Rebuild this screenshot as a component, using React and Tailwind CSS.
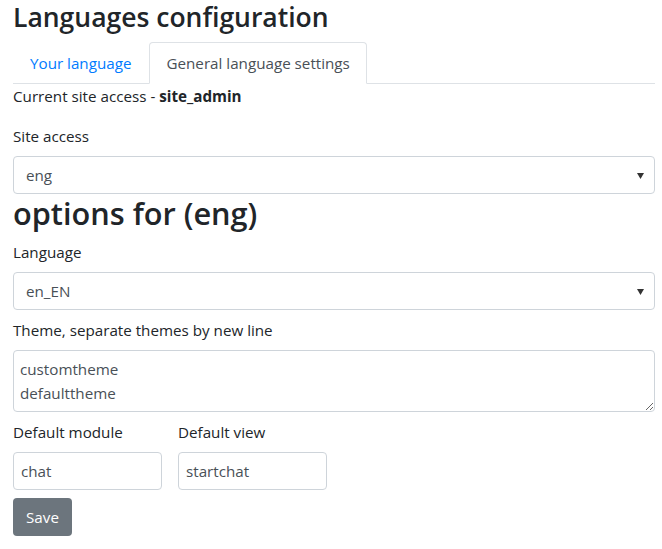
const FONT = '"Open Sans", "Noto Sans", sans-serif';

function SelectBox({ value }) {
  return (
    <div className="flex h-[38px] w-full items-center justify-between rounded-[4px] border border-[#ced4da] bg-white pl-[12px] pr-[10px] text-[15.2px] text-[#495057]">
      <span>{value}</span>
      <svg width="7" height="6" viewBox="0 0 7 6" className="mt-[1px]">
        <path d="M0 0 H7 L3.5 6 Z" fill="#333" />
      </svg>
    </div>
  );
}

function Label({ children }) {
  return <label className="mb-[8px] block h-[24px] text-[15.2px] leading-[24px] text-[#212529]">{children}</label>;
}

export default function App() {
  return (
    <div
      className="min-h-[549px] bg-white pl-[13px] text-[15.2px] leading-[24px] text-[#212529]"
      style={{ fontFamily: FONT }}
    >
      <div className="w-[642px]">
        <h1 className="mb-[8px] pt-[1px] text-[26.5px] font-semibold leading-[33px]">Languages configuration</h1>

        <ul className="flex border-b border-[#dee2e6]">
          <li className="-mb-px">
            <a className="block rounded-t-[4px] border border-transparent px-[16px] py-[8px] text-[#007bff]">Your language</a>
          </li>
          <li className="-mb-px ml-[1px]">
            <a className="block rounded-t-[4px] border border-[#dee2e6] border-b-white bg-white px-[16px] py-[8px] text-[#495057]">
              General language settings
            </a>
          </li>
        </ul>

        <p className="mb-[16px]">
          Current site access - <b>site_admin</b>
        </p>

        <Label>Site access</Label>
        <SelectBox value="eng" />

        <h2 className="mb-[8px] pt-[1px] text-[30.7px] font-semibold leading-[37px]">options for (eng)</h2>

        <Label>Language</Label>
        <SelectBox value="en_EN" />

        <div className="mt-[8px]">
          <Label>Theme, separate themes by new line</Label>
          <textarea
            readOnly
            rows={2}
            defaultValue={"customtheme\ndefaulttheme"}
            className="block h-[62px] w-full rounded-[4px] border border-[#ced4da] px-[6px] py-[6px] text-[15.2px] leading-[24px] text-[#495057] outline-none"
            style={{ fontFamily: FONT }}
          />
        </div>

        <div className="mt-[8px] flex gap-[16px]">
          <div className="w-[149px]">
            <Label>Default module</Label>
            <div className="flex h-[38px] items-center rounded-[4px] border border-[#ced4da] px-[7px] text-[#495057]">chat</div>
          </div>
          <div className="w-[149px]">
            <Label>Default view</Label>
            <div className="flex h-[38px] items-center rounded-[4px] border border-[#ced4da] px-[7px] text-[#495057]">startchat</div>
          </div>
        </div>

        <button
          type="button"
          className="mt-[8px] h-[38px] w-[59px] rounded-[4px] bg-[#6c757d] text-center text-[15.2px] text-white"
        >
          Save
        </button>
      </div>
    </div>
  );
}
